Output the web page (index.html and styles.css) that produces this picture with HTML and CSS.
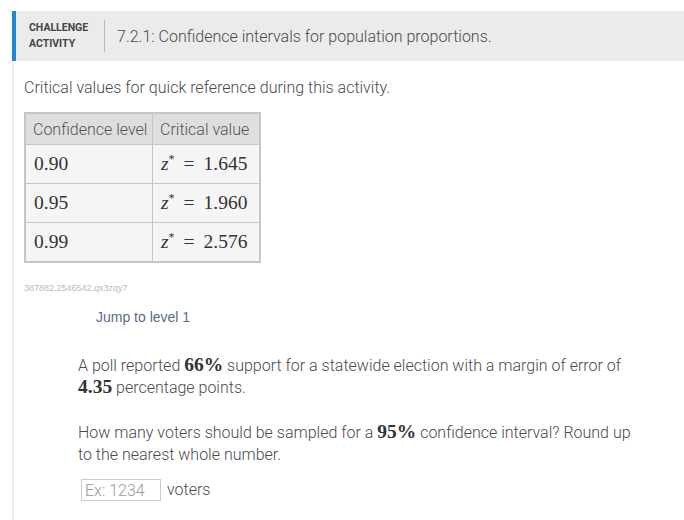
FILE: index.html
```html
<!DOCTYPE html>
<html>
<head>
<meta charset="utf-8">
<link rel="stylesheet" href="styles.css">
</head>
<body>
<div class="page">
  <div class="header">
    <div class="label">Challenge<br>Activity</div>
    <div class="divider"></div>
    <div class="title">7.2.1: Confidence intervals for population proportions.</div>
  </div>
  <div class="content">
    <p class="intro">Critical values for quick reference during this activity.</p>
    <table class="crit">
      <thead>
        <tr><th class="c1">Confidence level</th><th class="c2">Critical value</th></tr>
      </thead>
      <tbody>
        <tr><td class="m">0.90</td><td class="m"><i>z</i><sup>*</sup><span class="eq">=</span>1.645</td></tr>
        <tr><td class="m">0.95</td><td class="m"><i>z</i><sup>*</sup><span class="eq">=</span>1.960</td></tr>
        <tr><td class="m">0.99</td><td class="m"><i>z</i><sup>*</sup><span class="eq">=</span>2.576</td></tr>
      </tbody>
    </table>
    <div class="code">387882.2546542.qx3zqy7</div>
    <div class="jump">Jump to level 1</div>
    <div class="question">
      <p>A poll reported <span class="mb">66%</span> support for a statewide election with a margin of error of <span class="mb">4.35</span> percentage points.</p>
      <p>How many voters should be sampled for a <span class="mb">95%</span> confidence interval? Round up to the nearest whole number.</p>
      <div class="answer"><input class="inp" type="text" placeholder="Ex: 1234"><span class="unit">voters</span></div>
    </div>
  </div>
</div>
</body>
</html>
```

FILE: styles.css
```css
html, body {
  margin: 0;
  padding: 0;
  background: #fff;
}
.page {
  padding-top: 11px;
  font-family: Roboto, "Liberation Sans", sans-serif;
  font-weight: 300;
  color: #444;
}
.header {
  margin-left: 12px;
  height: 50px;
  background: #ebebeb;
  border-left: 4px solid #1b8ad3;
  display: flex;
  align-items: center;
}
.label {
  padding-left: 13px;
  width: 75px;
  font-weight: 700;
  font-size: 10.5px;
  line-height: 16px;
  text-transform: uppercase;
  color: #444;
}
.divider {
  width: 1px;
  height: 32px;
  background: #bbb;
  margin: 0 12px 0 0;
}
.title {
  font-size: 16px;
  color: #4a4a4a;
}
.content {
  margin-left: 12px;
  border-left: 2px solid #eee;
  padding-left: 10px;
  padding-bottom: 40px;
}
.intro {
  margin: 0;
  padding-top: 17px;
  font-size: 16px;
  line-height: 20px;
  color: #4a4a4a;
}
.crit {
  margin-top: 14px;
  border-collapse: collapse;
  border: 2px solid #c6c6c6;
  table-layout: fixed;
  width: 234px;
}
.crit th {
  background: #dedede;
  font-weight: 300;
  font-size: 16px;
  text-align: left;
  height: 30px;
  padding: 0 0 0 7px;
  border: 1px solid #c6c6c6;
  color: #555;
  white-space: nowrap;
}
.crit td {
  background: #f5f5f5;
  height: 38px;
  padding: 0 0 0 8px;
  border: 1px solid #c6c6c6;
}
.c1 { width: 119px; }
.c2 { width: 99px; }
.m {
  font-family: "Liberation Serif", serif;
  font-weight: 400;
  font-size: 19.5px;
  color: #333;
}
.m i { font-style: italic; }
.m sup {
  font-size: 12px;
  vertical-align: 7px;
  line-height: 0;
}
.eq { margin: 0 9px 0 9px; }
.code {
  margin-top: 19px;
  font-family: "Liberation Sans", Arial, sans-serif;
  font-size: 9px;
  line-height: 12px;
  color: #bbb;
  font-weight: 400;
}
.jump {
  margin-top: 14px;
  margin-left: 72px;
  font-family: "Liberation Sans", Arial, sans-serif;
  font-weight: 400;
  font-size: 14px;
  line-height: 18px;
  color: #5b6b8c;
}
.question {
  margin-left: 54px;
  margin-top: 29px;
  width: 562px;
  font-size: 16px;
  line-height: 22px;
  color: #4a4a4a;
}
.question p {
  margin: 0 0 23px 0;
}
.mb {
  font-family: "Liberation Serif", serif;
  font-weight: 700;
  font-size: 19.5px;
  line-height: 1;
  color: #333;
}
.answer {
  display: flex;
  align-items: center;
  margin-top: -10px;
  padding-left: 3px;
}
.inp {
  width: 72px;
  height: 20px;
  box-sizing: content-box;
  padding: 0 3px;
  border: 1px solid #ccc;
  font-family: Roboto, sans-serif;
  font-weight: 300;
  font-size: 16px;
  color: #333;
  outline: none;
}
.inp::placeholder { color: #999; }
.unit { margin-left: 6px; }
```
